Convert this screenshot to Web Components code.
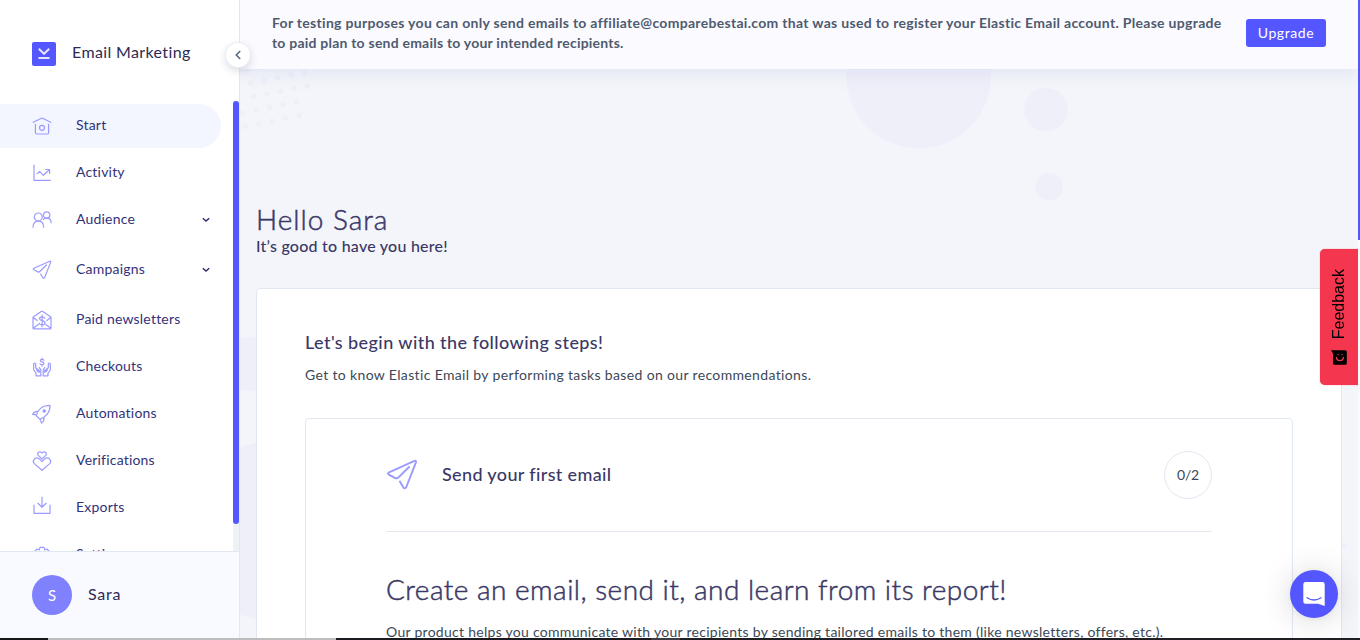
<!DOCTYPE html>
<html lang="en">
<head>
<meta charset="utf-8">
<title>Email Marketing</title>
<style>
  html, body { height: 100%; }
  body {
    margin: 0;
    overflow: hidden;
    background: #f4f5fa;
    font-family: Lato, "Open Sans", sans-serif;
    font-size: 14px;
    color: #3c4858;
  }
</style>
</head>
<body>
<em-app>
  <em-sidebar slot="sidebar" user="Sara">
    <em-nav-item icon="home" active>Start</em-nav-item>
    <em-nav-item icon="chart">Activity</em-nav-item>
    <em-nav-item icon="people" expandable>Audience</em-nav-item>
    <em-nav-item icon="plane" expandable>Campaigns</em-nav-item>
    <em-nav-item icon="letter">Paid newsletters</em-nav-item>
    <em-nav-item icon="hands">Checkouts</em-nav-item>
    <em-nav-item icon="rocket">Automations</em-nav-item>
    <em-nav-item icon="hearts">Verifications</em-nav-item>
    <em-nav-item icon="download">Exports</em-nav-item>
    <em-nav-item icon="gear">Settings</em-nav-item>
  </em-sidebar>

  <em-banner slot="banner" action="Upgrade">For testing purposes you can only send emails to affiliate@comparebestai.com that was used to register your Elastic Email account. Please upgrade<br><span style="letter-spacing: .22px">to paid plan to send emails to your intended recipients.</span></em-banner>

  <em-greeting>
    <span slot="title">Hello Sara</span>
    It’s good to have you here!
  </em-greeting>

  <em-card>
    <span slot="title">Let's begin with the following steps!</span>
    <span slot="text">Get to know Elastic Email by performing tasks based on our recommendations.</span>
    <em-task progress="0/2">
      <span slot="name">Send your first email</span>
      <span slot="title">Create an email, send it, and learn from its report!</span>
      Our product helps you communicate with your recipients by sending tailored emails to them (like newsletters, offers, etc.).
    </em-task>
  </em-card>
</em-app>
<em-feedback>Feedback</em-feedback>
<em-chat></em-chat>
<em-edges></em-edges>

<script>
const ICONS = {
  home: '<path d="M1.3 6.3 10 2l8.7 4.3M3.4 8.3v8.2a1.5 1.5 0 0 0 1.5 1.5h10.2a1.5 1.5 0 0 0 1.5-1.5V8.3"/><circle cx="10" cy="11.8" r="2.5"/>',
  chart: '<path d="M2 2v15.3h16.3M5 10.9l2.6-2.6 3.8 4 6-5.6M13.6 6.5h4v4"/>',
  people: '<circle cx="6.3" cy="7" r="4"/><path d="M1 17.2c0-3.6 2-6.1 5.3-6.1s5.3 2.4 5.3 6.1"/><circle cx="14.7" cy="5" r="3.2"/><path d="M11.6 9.3c.9-.8 1.9-1.2 3.1-1.2 2.8 0 4.4 1.8 4.4 4.6"/>',
  plane: '<path d="M5.8 11.9 1.8 9.8Q.6 9 1.9 8.3L17.8 1.2q1.3-.4.9.9l-6 15.4q-.9 1.6-1.9.2l-2.1-3.6M5.8 11.9q1.2.5 2-.4L14.4 5"/>',
  letter: '<path d="M1 7.7v10.2q0 .9.9.9h16.2q.9 0 .9-.9V7.7q0-.6-.5-.9l-7.700-5.200q-.8-.5-1.600 0L1.500 6.800q-.5.3-.5.9zM1.200 7.500l4 3M1.200 18.300l5-3.700M18.800 7.500l-4 3M18.800 18.300l-5-3.700M12.800 8.300q-.5-1.400-2.700-1.400-2.500 0-2.500 1.800c0 2.600 5.400 1.300 5.400 4.100 0 1.500-1.200 2.100-2.900 2.100q-2.400 0-3-1.700M10.100 5v11.800"/>',
  hands: '<path d="M11.900 3.300q-.5-.9-1.900-.9-1.700 0-1.700 1.200c0 1.800 3.600.9 3.600 2.800 0 1-.8 1.400-1.900 1.400q-1.400 0-2-1M10 1v1.400M10 7.800v1.400M4 18.800v-2.600L1.700 13V6.600q1-1.200 2 0v4.100l3.600 3.100q.8 2-.8 1.200l-1.900-2M7.300 10.600l1.500 2.200v6H4M16 18.800v-2.600l2.300-3.200V6.600q-1-1.200-2 0v4.100l-3.600 3.100q-.8 2 .8 1.200l1.900-2M12.700 10.600l-1.500 2.200v6H16"/>',
  rocket: '<path d="M4.300 11.700C5.600 5.600 10.500 1.300 18 1.300c.2 7-4.100 12.200-10.200 13.800zM5.900 7.300q-3.800-.2-5.300 3l3.700.5M12 13.800q.2 3.700-2.400 5.300L8 15.300"/><circle cx="12.200" cy="7" r="1.200" fill="#9b9bff"/>',
  hearts: '<path d="M10 8 6.200 4.400C4.300 2.300 7.700-1 10 2c2.300-3 5.700.3 3.800 2.400zM10 19.300l-7.700-6.700c-2.700-3 1.300-7.400 4.900-4.700L10 10.700l2.800-2.800c3.600-2.700 7.600 1.700 4.900 4.700z"/>',
  download: '<path d="M2 7v8.300h16V7M10-.8V9M5.900 5.300 10 9.200l4.100-3.900"/>',
  gear: '<path d="M2.800 6.400 5 4l2.300.9L8 2.300h4l.7 2.600L15 4l2.200 2.400-1 2.200 1.800 1v3l-2.600 1-1 3H5.600l-1-3-2.600-1v-3l1.800-1z"/><circle cx="10" cy="10" r="3"/>'
};

const svg = (name, size, stroke = 1.2) => `
  <svg width="${size}" height="${size}" viewBox="0 0 20 20" fill="none" stroke="#9b9bff"
    stroke-width="${stroke}" stroke-linecap="round" stroke-linejoin="round" overflow="visible">${ICONS[name]}</svg>`;

class EmApp extends HTMLElement {
  constructor() {
    super();
    this._root = this.attachShadow({ mode: 'open' });
  }

  connectedCallback() {
    this._root.innerHTML = `
      <style>
        :host { display: flex; height: 100vh; }
        .main {
          flex: 1;
          min-width: 0;
          position: relative;
          overflow: hidden;
          display: flex;
          flex-direction: column;
          padding-right: 2px;
        }
        .shapes { position: absolute; left: 0; top: 0; }
        .content {
          position: relative;
          flex: 1;
          padding: 133px 16px 0;
        }
      </style>
      <slot name="sidebar"></slot>
      <div class="main">
        <svg class="shapes" width="1118" height="640" fill="#efeff9">${this._shapes()}</svg>
        <slot name="banner"></slot>
        <div class="content"><slot></slot></div>
      </div>
    `;
  }

  _shapes() {
    const circles = [[678.7, 76, 72.3], [806, 109.7, 21.8], [809, 186.7, 13.8], [10, 364, 27], [37, 531, 91], [1104, 546, 2.7]];
    // dotted grid, slightly turned
    const rows = [[-2, 4], [0, 4], [-1, 3], [-1, 3]];
    rows.forEach(([from, to], r) => {
      for (let c = from; c <= to; c++) {
        circles.push([10.7 + r * 2.7 + c * 13.45, 83.3 + r * 13.5 - c * 2.75, 2.7]);
      }
    });
    circles.push([8, 70, 2.7], [21.5, 67.5, 2.7]);
    return circles.map(([x, y, r]) => `<circle cx="${x}" cy="${y}" r="${r}"/>`).join('');
  }
}

class EmSidebar extends HTMLElement {
  constructor() {
    super();
    this._root = this.attachShadow({ mode: 'open' });
  }

  connectedCallback() {
    const user = this.getAttribute('user');
    this._root.innerHTML = `
      <style>
        :host {
          box-sizing: border-box;
          width: 240px;
          height: 100%;
          flex: none;
          display: flex;
          flex-direction: column;
          position: relative;
          z-index: 2;
          background: white;
          border-right: 1px solid #e2e8f0;
        }
        .brand {
          height: 101px;
          flex: none;
          box-sizing: border-box;
          display: flex;
          align-items: flex-start;
          gap: 16px;
          padding: 42px 0 0 32px;
          font-size: 16px;
          line-height: 20px;
          letter-spacing: .37px;
          color: #2d2a55;
        }
        .scroll {
          flex: 1;
          min-height: 0;
          display: flex;
          overflow: hidden;
        }
        nav { flex: 1; padding-top: 3px; }
        .track { width: 6px; background: #edf2f7; }
        .thumb { height: 423px; border-radius: 3px; background: #5457ff; }
        .user {
          flex: none;
          box-sizing: border-box;
          height: 89px;
          border-top: 1px solid #e2e8f0;
          background: #f9faff;
          display: flex;
          align-items: center;
          gap: 16px;
          padding: 0 0 3px 32px;
          font-size: 16px;
          color: #2d2a55;
        }
        .name { padding-bottom: 2px; letter-spacing: .8px; }
        .avatar {
          width: 40px;
          height: 40px;
          border-radius: 50%;
          background: #7f81ff;
          color: white;
          display: grid;
          place-items: center;
          font-size: 15px;
        }
        .collapse {
          position: absolute;
          left: 226px;
          top: 43px;
          width: 24px;
          height: 24px;
          border-radius: 50%;
          background: white;
          display: grid;
          place-items: center;
          box-shadow: 0 0 0 1px #e8edf5, 0 3px 8px rgba(60, 70, 110, .22);
        }
      </style>
      <div class="brand">
        <svg width="24" height="24" viewBox="0 0 24 24" fill="none" stroke="#e6e6ff" stroke-width="2">
          <rect width="24" height="24" rx="2" fill="#5457ff" stroke="none"/>
          <path d="M6.8 6.8 12 11.8l5.2-5M6.500 16h11"/>
        </svg>
        <span>Email Marketing</span>
      </div>
      <div class="scroll">
        <nav><slot></slot></nav>
        <div class="track"><div class="thumb"></div></div>
      </div>
      <div class="user"><span class="avatar">${user[0]}</span><span class="name">${user}</span></div>
      <div class="collapse">
        <svg width="10" height="10" viewBox="0 0 10 10" fill="none" stroke="#5c6b80" stroke-width="1.6"><path d="M7.200 1 3.300 5l3.900 4"/></svg>
      </div>
    `;
  }
}

class EmNavItem extends HTMLElement {
  constructor() {
    super();
    this._root = this.attachShadow({ mode: 'open' });
  }

  connectedCallback() {
    const expandable = this.hasAttribute('expandable');
    this._root.innerHTML = `
      <style>
        :host {
          box-sizing: border-box;
          display: flex;
          align-items: center;
          height: 44px;
          margin: 0 12px 3px 0;
          padding: 0 10px 0 32px;
          border-radius: 0 22px 22px 0;
          color: #32327a;
          letter-spacing: .2px;
        }
        :host([active]) { background: #f3f6ff; }
        :host([expandable]) { margin-bottom: 6px; }
        .label { flex: 1; padding: 0 0 4px 24px; }
        svg { flex: none; }
      </style>
      ${svg(this.getAttribute('icon'), 20)}
      <span class="label"><slot></slot></span>
      ${expandable ? '<svg width="10" height="10" viewBox="0 0 10 10" fill="none" stroke="#2d2a6a" stroke-width="1.4"><path d="M1.8 3.2 5 6.1l3.2-2.9"/></svg>' : ''}
    `;
  }
}

class EmBanner extends HTMLElement {
  constructor() {
    super();
    this._root = this.attachShadow({ mode: 'open' });
  }

  connectedCallback() {
    this._root.innerHTML = `
      <style>
        :host {
          box-sizing: border-box;
          flex: none;
          height: 69px;
          display: flex;
          align-items: flex-start;
          justify-content: space-between;
          position: relative;
          padding: 13px 32px 0;
          background: #fbfaff;
          box-shadow: 0 5px 15px rgba(200, 208, 235, .4);
        }
        .text {
          font-weight: 700;
          line-height: 20px;
          letter-spacing: .3px;
          white-space: nowrap;
          color: #4f5b6f;
        }
        button {
          width: 80px;
          height: 28px;
          margin-top: 6px;
          padding: 0 0 2px;
          border: 0;
          border-radius: 3px;
          background: #5457ff;
          color: white;
          font: inherit;
          letter-spacing: .6px;
        }
      </style>
      <div class="text"><slot></slot></div>
      <button>${this.getAttribute('action')}</button>
    `;
  }
}

class EmGreeting extends HTMLElement {
  constructor() {
    super();
    this._root = this.attachShadow({ mode: 'open' });
    this._root.innerHTML = `
      <style>
        :host { display: block; height: 86px; color: #3a3866; }
        .title {
          font-size: 28px;
          line-height: 34px;
          font-weight: 300;
          letter-spacing: 1px;
          -webkit-text-stroke: .5px;
        }
        .text { font-size: 16px; line-height: 20px; font-weight: 500; letter-spacing: .24px; }
      </style>
      <div class="title"><slot name="title"></slot></div>
      <div class="text"><slot></slot></div>
    `;
  }
}

class EmCard extends HTMLElement {
  constructor() {
    super();
    this._root = this.attachShadow({ mode: 'open' });
    this._root.innerHTML = `
      <style>
        :host {
          box-sizing: border-box;
          display: block;
          height: 500px;
          padding: 41px 48px;
          border: 1px solid #e2e8f0;
          border-radius: 4px;
          background: white;
        }
        .title { font-size: 18px; line-height: 24px; font-weight: 500; letter-spacing: .42px; color: #3a3866; }
        .text { margin: 10px 0 33px; line-height: 21px; letter-spacing: .35px; }
      </style>
      <div class="title"><slot name="title"></slot></div>
      <div class="text"><slot name="text"></slot></div>
      <slot></slot>
    `;
  }
}

class EmTask extends HTMLElement {
  constructor() {
    super();
    this._root = this.attachShadow({ mode: 'open' });
  }

  connectedCallback() {
    this._root.innerHTML = `
      <style>
        :host {
          box-sizing: border-box;
          display: block;
          height: 400px;
          padding: 32px 80px;
          border: 1px solid #e2e8f0;
          border-radius: 4px;
        }
        .head {
          display: flex;
          align-items: center;
          gap: 24px;
          padding-bottom: 32px;
          border-bottom: 1px solid #e2e8f0;
        }
        .name { flex: 1; padding-bottom: 2px; font-size: 18px; font-weight: 500; letter-spacing: .36px; color: #3a3866; }
        .progress {
          box-sizing: border-box;
          width: 48px;
          height: 48px;
          padding-bottom: 2px;
          border: 1px solid #e2e8f0;
          border-radius: 50%;
          display: grid;
          place-items: center;
          letter-spacing: -.2px;
        }
        .title {
          margin-top: 38px;
          font-size: 28px;
          line-height: 38px;
          font-weight: 300;
          letter-spacing: .48px;
          -webkit-text-stroke: .5px;
          color: #3a3866;
        }
        .text { margin-top: 13px; line-height: 21px; letter-spacing: .28px; white-space: nowrap; }
      </style>
      <div class="head">
        ${svg('plane', 32, 1.2)}
        <span class="name"><slot name="name"></slot></span>
        <span class="progress">${this.getAttribute('progress')}</span>
      </div>
      <div class="title"><slot name="title"></slot></div>
      <div class="text"><slot></slot></div>
    `;
  }
}

class EmFeedback extends HTMLElement {
  constructor() {
    super();
    this._root = this.attachShadow({ mode: 'open' });
    this._root.innerHTML = `
      <style>
        :host {
          position: fixed;
          right: 2px;
          top: 249px;
          width: 38px;
          height: 136px;
          z-index: 5;
          display: flex;
          flex-direction: column;
          align-items: center;
          gap: 11px;
          box-sizing: border-box;
          padding-top: 20px;
          border-radius: 5px 0 0 5px;
          background: #f5364f;
          box-shadow: 0 0 1px #f5364f;
          color: black;
          font: 16px/20px "Liberation Sans", Arial, sans-serif;
        }
        span { writing-mode: vertical-rl; transform: rotate(180deg); }
      </style>
      <span><slot></slot></span>
      <svg width="16" height="16" viewBox="0 0 16 16" fill="none" stroke="#f5364f" stroke-width="1.3" stroke-linecap="round">
        <path d="M0 .2h14.3q1.500 0 1.500 1.500v11.500q0 1.500-1.500 1.500H3.500Q2 14.700 2 13.200V3.500z" fill="#000" stroke="none"/>
        <path d="M5.400 7.400c.6 4.400 6.400 4.400 7 0"/>
        <path d="M7 4.700h.1M10.900 4.700h.1"/>
      </svg>
    `;
  }
}

class EmChat extends HTMLElement {
  constructor() {
    super();
    this._root = this.attachShadow({ mode: 'open' });
    this._root.innerHTML = `
      <style>
        :host {
          position: fixed;
          right: 22px;
          bottom: 22px;
          width: 48px;
          height: 48px;
          z-index: 5;
          display: grid;
          place-items: center;
          border-radius: 50%;
          background: #5457ff;
          box-shadow: 0 1px 6px rgba(0, 0, 0, .06), 0 2px 32px rgba(0, 0, 0, .16);
        }
      </style>
      <svg width="22" height="24" viewBox="0 0 22 24" fill="none">
        <path d="M2.500 0h17Q21.700 0 21.700 2.200V24l-6.500-2.300H2.500Q.3 21.700.3 19.500V2.200Q.3 0 2.500 0z" fill="white"/>
        <path d="M4 15.700q7 4.600 14 0" stroke="#5457ff" stroke-width="1.3" stroke-linecap="round"/>
      </svg>
    `;
  }
}

// window edges: page scrollbar on the right, taskbar line at the bottom
class EmEdges extends HTMLElement {
  constructor() {
    super();
    this._root = this.attachShadow({ mode: 'open' });
    this._root.innerHTML = `
      <style>
        .right, .bottom { position: fixed; right: 0; bottom: 0; z-index: 10; }
        .right { top: 0; width: 2px; background: linear-gradient(#5457ff 240px, #fbfbfd 240px); }
        .bottom {
          left: 0;
          height: 2px;
          background: linear-gradient(90deg, #161616 48px, #bdbdbd 48px 336px, #1b1b1f 336px 651px, #3c3c42 651px 680px, #1f1f24 680px);
        }
      </style>
      <div class="right"></div>
      <div class="bottom"></div>
    `;
  }
}

customElements.define('em-app', EmApp);
customElements.define('em-sidebar', EmSidebar);
customElements.define('em-nav-item', EmNavItem);
customElements.define('em-banner', EmBanner);
customElements.define('em-greeting', EmGreeting);
customElements.define('em-card', EmCard);
customElements.define('em-task', EmTask);
customElements.define('em-feedback', EmFeedback);
customElements.define('em-chat', EmChat);
customElements.define('em-edges', EmEdges);
</script>
</body>
</html>
